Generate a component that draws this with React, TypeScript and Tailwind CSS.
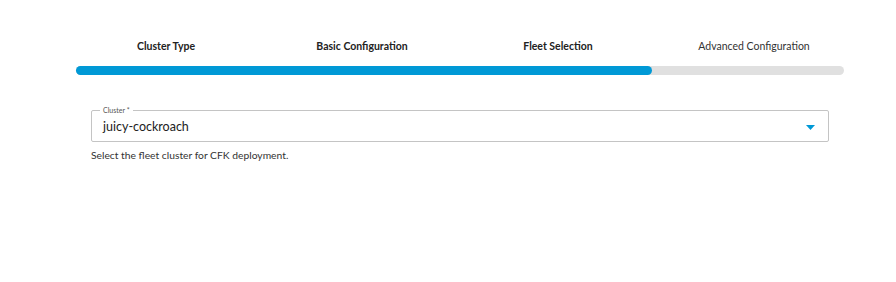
import React from 'react';

const steps = [
    { label: 'Cluster Type', done: true },
    { label: 'Basic Configuration', done: true },
    { label: 'Fleet Selection', done: true },
    { label: 'Advanced Configuration', done: false },
];

const App: React.FC = () => {
    return (
        <div className="w-[896px] h-[282px] bg-white font-['Lato','Noto_Sans',sans-serif] text-[#333]">
            <div className="ml-[76px] w-[768px] pt-[38px]">
                <div className="grid grid-cols-4 -mx-[8px] h-[16px] text-[10.5px] leading-[16px]">
                    {steps.map(s => (
                        <div key={s.label} className={`text-center ${s.done ? 'font-bold text-[#222]' : 'font-normal text-[#333]'}`}>
                            {s.label}
                        </div>
                    ))}
                </div>
                <div className="mt-[12px] h-[9px] rounded-full bg-[#e0e0e0]">
                    <div className="h-full w-[576px] rounded-full bg-[#0099d6]" />
                </div>
                <div className="px-[15px] mt-[31px]">
                    <fieldset className="relative h-[36px] border border-[#c4c4c4] rounded-[2px] pl-[8px] pr-[12px]">
                        <legend className="px-[3px] text-[7px] leading-[8px] text-[#555]">Cluster *</legend>
                        <div className="flex items-center justify-between h-[24px] pl-[3px] mt-[1px]">
                            <span className="text-[12.5px] text-[#222]">juicy-cockroach</span>
                            <svg width="9" height="5" viewBox="0 0 9 5" className="mr-[1px]">
                                <path d="M0 0 H9 L4.5 5 Z" fill="#0099d6" />
                            </svg>
                        </div>
                    </fieldset>
                    <p className="mt-[7px] text-[10.3px] leading-[12px] text-[#333]">Select the fleet cluster for CFK deployment.</p>
                </div>
            </div>
        </div>
    );
};

export default App;
